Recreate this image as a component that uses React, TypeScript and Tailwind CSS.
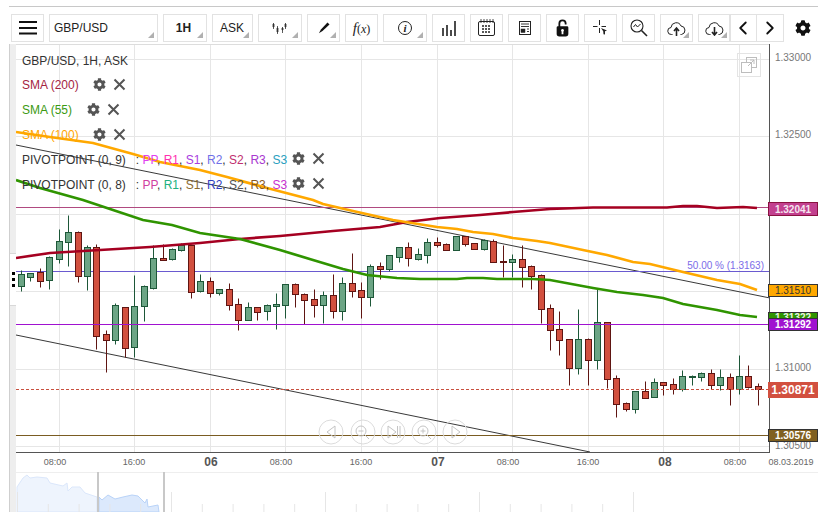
import React from 'react';
import { FaCog } from 'react-icons/fa';
import { ChevronLeft, ChevronRight } from 'lucide-react';

// candles: x, wick top, body top, body bottom, wick bottom, colour (1 = up)
type Candle = [number, number, number, number, number, number];

const groupA: Candle[] = [
  [64, 210, 223, 259, 272, 1], [91, 218, 220, 230, 242, 1], [121, 205, 217, 242, 260, 0], [148, 168, 172, 241, 266, 1],
  [178, 87, 124, 178, 188, 1], [205, 45, 97, 127, 197, 1], [235, 93, 97, 229, 245, 0], [262, 136, 142, 229, 269, 1],
  [289, 132, 142, 409, 446, 0], [319, 391, 403, 421, 515, 0], [346, 309, 316, 421, 431, 1], [376, 322, 322, 445, 471, 0],
  [403, 225, 319, 442, 471, 1], [433, 256, 259, 319, 362, 1], [460, 136, 175, 263, 266, 1], [490, 133, 175, 179, 181, 0],
  [517, 145, 148, 178, 181, 1], [544, 130, 136, 151, 152, 1], [574, 136, 136, 277, 293, 0], [601, 223, 244, 274, 277, 1],
  [631, 232, 244, 280, 292, 0], [658, 266, 268, 280, 284, 1], [688, 250, 268, 316, 329, 0], [715, 295, 313, 361, 389, 0],
  [745, 307, 322, 361, 361, 1], [772, 322, 322, 337, 359, 0], [802, 313, 316, 334, 359, 1], [829, 280, 313, 319, 386, 1],
];

const groupB: Candle[] = [
  [16, 253, 253, 316, 353, 1], [46, 250, 253, 283, 320, 0], [73, 280, 283, 301, 372, 0], [103, 268, 298, 316, 350, 0],
  [130, 274, 286, 316, 368, 1], [160, 223, 286, 334, 353, 0], [187, 232, 250, 334, 359, 1], [217, 160, 250, 274, 292, 0],
  [244, 247, 271, 292, 353, 0], [271, 193, 199, 292, 317, 1], [301, 187, 199, 208, 238, 0], [328, 166, 166, 208, 212, 1],
  [358, 142, 142, 172, 185, 1], [385, 127, 142, 175, 197, 0], [415, 145, 163, 178, 181, 1], [442, 115, 127, 166, 188, 1],
  [472, 112, 127, 136, 142, 0], [499, 130, 133, 151, 151, 0], [529, 109, 109, 151, 151, 1], [556, 109, 109, 133, 139, 0],
  [583, 130, 130, 148, 148, 0], [613, 118, 121, 148, 151, 1], [640, 118, 124, 187, 187, 0], [670, 136, 184, 187, 230, 0],
  [697, 163, 178, 187, 230, 1], [727, 136, 178, 202, 260, 0], [754, 196, 199, 229, 268, 0], [784, 223, 226, 328, 368, 0],
  [811, 313, 325, 391, 451, 0], [838, 334, 388, 421, 466, 0],
];

const groupC: Candle[] = [
  [58, 418, 418, 505, 556, 0], [85, 328, 418, 505, 523, 1], [115, 415, 418, 481, 556, 0], [142, 268, 367, 481, 508, 1],
  [172, 367, 367, 538, 563, 0], [199, 526, 535, 613, 650, 0], [229, 607, 610, 628, 634, 0], [256, 574, 574, 628, 640, 1],
  [286, 544, 574, 595, 595, 0], [313, 535, 547, 592, 592, 1], [340, 547, 547, 556, 586, 0], [370, 535, 553, 568, 583, 0],
  [397, 511, 529, 568, 574, 1], [427, 526, 529, 532, 556, 1], [454, 517, 520, 532, 544, 1], [484, 508, 520, 556, 568, 0],
  [511, 508, 532, 556, 571, 1], [541, 520, 532, 568, 616, 0], [568, 466, 529, 568, 583, 1], [595, 496, 529, 562, 565, 0],
  [625, 550, 559, 568, 616, 0],
];

const sma200 = "16,258 50,253 100,250 150,247 200,243 240,239 280,236 333,231 380,227 407,222 440,218 480,215 513,212 550,209 593,207.5 667,207.5 683,206 697,206 717,208 743,207 757,208";
const sma55 = "16,180 40,188 83,200 113,210 143,220 172,225 200,233 240,239 280,250 313,260 343,269 367,275 397,278 420,279 457,279 467,278 483,278 497,279 533,279 550,280 593,288 617,292 643,295 663,298 683,304 717,310 740,315 757,317";
const sma100 = "16,132 50,137 93,143 133,154 160,162 200,170 227,177 267,188 313,200 323,204 353,211 393,220 437,227 457,229 473,232 493,234 513,238 537,241 550,243 583,250 607,255 633,262 650,264 683,272 717,280 740,284 757,290";

const navLeft = "17,487 23,478 27,475 30,478 37,477 47,478 50,483 63,486 67,483 68,491 72,487 80,487 85,493 97,497";
const navMid = "99,497 102,500 108,495 115,499 123,497 132,495 138,496 145,503 147,499 148,507 158,505 159,512";

const vGrid = [59, 134, 210, 285, 361, 437, 512, 588, 663, 739];
const hGrid = [59, 136, 214, 291, 369, 446];
const timeLabels: [number, string][] = [[55, "08:00"], [134, "16:00"], [281, "08:00"], [361, "16:00"], [508, "08:00"], [588, "16:00"], [735, "08:00"]];
const dayLabels: [number, string][] = [[211, "06"], [438, "07"], [665, "08"]];
const axisLabels: [number, string][] = [[58, "1.33000"], [135, "1.32500"], [368, "1.31000"], [446, "1.30500"]];
const navTicks = Array.from({ length: 21 }, (_, i) => 17 + i * 30.8);

const CandleMark = ({ c, ox }: { c: Candle; ox: number }) => {
  const [zx, wt, bt, bb, wb, up] = c;
  const x = Math.floor(ox + zx / 3) + 0.5;
  const y = (v: number) => Math.round(200 + v / 3) + 0.5;
  const stroke = up ? '#1d5738' : '#5f1512';
  const fill = up ? '#6ca585' : '#d2503f';
  return (
    <g>
      <line x1={x} x2={x} y1={y(wt)} y2={y(wb)} stroke={stroke} />
      <rect x={x - 3} y={y(bt)} width={6} height={Math.max(y(bb) - y(bt), 1)} fill={fill} stroke={stroke} />
    </g>
  );
};

const Corner = () => (
  <span className="absolute right-[3px] bottom-[3px] w-0 h-0 border-l-[6px] border-b-[6px] border-l-transparent border-b-[#b0b0b0]" />
);

const ToolButton = ({ w, corner, children }: { w: string; corner?: boolean; children?: React.ReactNode }) => (
  <div className={`relative ${w} h-[28px] border border-[#e2e2e2] flex items-center justify-center text-[12px] text-[#222] shrink-0`}>
    {children}
    {corner && <Corner />}
  </div>
);

const IndicatorTools = () => (
  <span className="inline-flex items-center gap-[7px] text-[#555]">
    <FaCog size={13} />
    <svg width="13" height="13" viewBox="0 0 13 13"><path d="M1.500 1.500l10 10M11.500 1.500l-10 10" stroke="#555" strokeWidth="2" /></svg>
  </span>
);

const Pivot = ({ name, colors }: { name: string; colors: string[] }) => {
  const parts = ["PP", "R1", "S1", "R2", "S2", "R3", "S3"];
  return (
    <div className="flex items-center h-[25px]">
      <span className="text-[#333] whitespace-pre">{name}</span>
      <span className="text-[#333] ml-[10px] whitespace-pre">: </span>
      {parts.map((p, i) => (
        <span key={p} className="text-[#333] whitespace-pre">
          <span style={{ color: colors[i] }}>{p}</span>
          {i < 6 ? ", " : ""}
        </span>
      ))}
      <span className="ml-[5px]"><IndicatorTools /></span>
    </div>
  );
};

const CloudIcon = ({ down }: { down?: boolean }) => (
  <svg width="19" height="15" viewBox="0 0 19 15" fill="none" stroke="#222">
    <path d="M5.500 13.500H4.500a3.500 3.500 0 0 1-.5-7 5.200 5.200 0 0 1 10-1.500 4.300 4.300 0 0 1 .5 8.500h-1" strokeWidth="1" />
    <path d={down ? "M9.500 6v7.500M7 11l2.500 3 2.500-3" : "M9.500 15V7.500M7 10l2.500-3 2.500 3"} strokeWidth="1.600" />
  </svg>
);

const Toolbar = () => (
  <div className="flex items-start pl-[2px] pt-[7px] gap-[5px] h-[37px]">
    <ToolButton w="w-[33px]">
      <svg width="18" height="14" viewBox="0 0 18 14"><path d="M0 1h18M0 7h18M0 12.500h18" stroke="#111" strokeWidth="1.800" /></svg>
    </ToolButton>
    <ToolButton w="w-[109px]" corner><span className="w-full pl-[4px]">GBP/USD</span></ToolButton>
    <ToolButton w="w-[44px]" corner><span className="font-bold pr-[3px]">1H</span></ToolButton>
    <ToolButton w="w-[41px]" corner><span className="pr-[1px]">ASK</span></ToolButton>
    <ToolButton w="w-[44px]" corner>
      <svg className="mr-[1px]" width="15" height="11" viewBox="0 0 15 11" stroke="#333" fill="#333">
        <path d="M1.500 0v6M5.500 3v8M10.500 4v6M13.500 0v6" strokeWidth=".8" />
        <path d="M1 1h1v3H1zM5 5h1v4H5zM10 5h1v2h-1zM13 1h1v3h-1z" strokeWidth=".8" />
      </svg>
    </ToolButton>
    <ToolButton w="w-[33px]" corner>
      <svg className="mb-[1px]" width="12" height="12" viewBox="0 0 12 12"><path d="M9.500.5l2 2-7 6.500-3.600 2.200 2-3.600z" fill="#111" /></svg>
    </ToolButton>
    <ToolButton w="w-[33px]">
      <span className="[font-family:'Liberation_Serif',serif] italic text-[15px] leading-none">f<span className="text-[12px] not-italic">(<span className="italic">x</span>)</span></span>
    </ToolButton>
    <ToolButton w="w-[44px]" corner>
      <span className="w-[14px] h-[14px] rounded-full border border-[#222] flex items-center justify-center [font-family:'Liberation_Serif',serif] italic font-bold text-[11px]">i</span>
    </ToolButton>
    <ToolButton w="w-[33px]">
      <svg width="16" height="16" viewBox="0 0 16 16"><path d="M2 16V8M6 16V5M10 16V10M14 16V1" stroke="#111" strokeWidth="1.500" /></svg>
    </ToolButton>
    <ToolButton w="w-[33px]">
      <svg width="18" height="18" viewBox="0 0 18 18" fill="none" stroke="#222">
        <rect x=".5" y="2.500" width="16" height="14" rx="1.500" />
        <path d="M3 0v4M6 0v4M9 0v4M12 0v4M15 0v4" strokeWidth=".8" />
        <path d="M4 7h9M4 10h9M4 13h9" strokeWidth="1.500" strokeDasharray="2 1" />
      </svg>
    </ToolButton>
    <ToolButton w="w-[33px]">
      <svg width="12" height="14" viewBox="0 0 12 14" fill="none" stroke="#222">
        <rect x=".5" y=".5" width="11" height="13" />
        <path d="M2 3h8M2 5.500h8M8 8h2M8 10.500h2" strokeWidth=".9" />
        <rect x="2" y="8" width="4" height="3.500" fill="#222" strokeWidth=".5" />
      </svg>
    </ToolButton>
    <ToolButton w="w-[33px]">
      <svg width="13" height="18" viewBox="0 0 14 20">
        <path d="M3.500 9V5a3.500 3.500 0 0 1 7 0v1" fill="none" stroke="#111" strokeWidth="2" />
        <path fillRule="evenodd" d="M2 8h10a1.500 1.500 0 0 1 1.500 1.500v7A3 3 0 0 1 10.500 19.500h-7A3 3 0 0 1 .5 16.500v-7A1.500 1.500 0 0 1 2 8zM7 11a1.700 1.700 0 0 0-1 3v3h2v-3a1.700 1.700 0 0 0-1-3z" fill="#111" />
      </svg>
    </ToolButton>
    <ToolButton w="w-[33px]">
      <svg width="16" height="16" viewBox="0 0 16 16">
        <path d="M6.500 0v5M6.500 8v5M0 6.500h4.500M8.500 6.500h4.500" stroke="#222" />
        <path d="M8 8l6 2.500-2 .8 0 3.200-1.500-.2-.3-3z" fill="#222" />
      </svg>
    </ToolButton>
    <ToolButton w="w-[33px]">
      <svg width="18" height="18" viewBox="0 0 18 18" fill="none" stroke="#222">
        <circle cx="7" cy="7" r="6" strokeWidth="1.100" />
        <path d="M11.500 11.500L17 17" strokeWidth="1.600" />
        <path d="M3.500 8l2-2.500 2 2.500 3-3" strokeWidth="1" />
      </svg>
    </ToolButton>
    <ToolButton w="w-[33px]" corner><CloudIcon /></ToolButton>
    <ToolButton w="w-[33px]" corner><CloudIcon down /></ToolButton>
    <div className="flex h-[28px] -ml-[7px] bg-white shrink-0">
      <div className="w-[28px] border border-[#e2e2e2] flex items-center justify-center"><ChevronLeft size={22} strokeWidth={2} color="#111" /></div>
      <div className="w-[27px] border border-l-0 border-[#e2e2e2] flex items-center justify-center"><ChevronRight size={22} strokeWidth={2} color="#111" /></div>
    </div>
    <div className="w-[16px] ml-[6px] h-[28px] flex items-center justify-center text-[#111] shrink-0"><FaCog size={16} /></div>
  </div>
);

const Legend = () => (
  <div className="absolute left-[6px] top-[3px] text-[12px] leading-none">
    <div className="flex items-center h-[25px] pt-[2px] text-[#333]">GBP/USD, 1H, ASK</div>
    <div className="flex items-center h-[25px] text-[#a5243f]"><span className="w-[71px]">SMA (200)</span><IndicatorTools /></div>
    <div className="flex items-center h-[25px] text-[#3b9a12]"><span className="w-[65px]">SMA (55)</span><IndicatorTools /></div>
    <div className="flex items-center h-[25px] text-[#ffa500]"><span className="w-[71px]">SMA (100)</span><IndicatorTools /></div>
    <Pivot name="PIVOTPOINT (0, 9)" colors={["#e040f0", "#ff30b0", "#a83ce0", "#7070e8", "#c03070", "#a838d0", "#2a9fc0"]} />
    <Pivot name="PIVOTPOINT (0, 8)" colors={["#d0409f", "#20b080", "#8a6a30", "#3040c0", "#555555", "#8a5a20", "#c830d0"]} />
  </div>
);

const NavButton = ({ cx, children }: { cx: number; children: React.ReactNode }) => (
  <g fill="none" stroke="#c4c4c4">
    <circle cx={cx} cy={432} r={12} stroke="#dcdcdc" />
    {children}
  </g>
);

const PriceTag = ({ y, h, bg, border, color, size, label, bold }: { y: number; h: number; bg: string; border: string; color: string; size: number; label: string; bold?: boolean }) => (
  <g>
    <rect x={768.5} y={y + 0.5} width={49} height={h} fill={bg} stroke={border} />
    <text x={793} y={y + h / 2 + size * 0.36 + 0.5} textAnchor="middle" fontSize={size} fill={color} fontWeight={bold ? 'bold' : 'normal'}>{label}</text>
  </g>
);

const Chart = () => (
  <svg className="block" width="802" height="468" viewBox="16 44 802 468">
    {vGrid.map((x) => <line key={x} x1={x + 0.5} x2={x + 0.5} y1={44} y2={452} stroke="#e6e6e6" />)}
    {hGrid.map((y) => <line key={y} x1={16} x2={769} y1={y + 0.5} y2={y + 0.5} stroke="#e6e6e6" />)}
    <line x1={16} x2={770} y1={44.500} y2={44.500} stroke="#dddddd" />

    <line x1={16} x2={770} y1={145} y2={298} stroke="#222" strokeWidth={0.9} />
    <line x1={16} x2={590} y1={335} y2={452} stroke="#222" strokeWidth={0.9} />

    <line x1={16} x2={770} y1={207.500} y2={207.500} stroke="#b04a80" />
    <line x1={16} x2={770} y1={271.500} y2={271.500} stroke="#6a5ad0" />
    <line x1={16} x2={770} y1={435.500} y2={435.500} stroke="#7a5c22" />

    {groupA.map((c) => <CandleMark key={c[0]} c={c} ox={0} />)}
    {groupB.map((c) => <CandleMark key={c[0]} c={c} ox={280} />)}
    {groupC.map((c) => <CandleMark key={c[0]} c={c} ox={550} />)}

    <line x1={16} x2={770} y1={324.500} y2={324.500} stroke="#a012d0" />
    <line x1={16} x2={770} y1={389.500} y2={389.500} stroke="#c9503f" strokeDasharray="3 2" />

    <polyline points={sma200} fill="none" stroke="#a50021" strokeWidth={2.7} />
    <polyline points={sma55} fill="none" stroke="#2f9400" strokeWidth={2.7} />
    <polyline points={sma100} fill="none" stroke="#ffa800" strokeWidth={2.7} />

    <text x={764} y={269} textAnchor="end" fontSize={10} fill="#7b6be8">50.00 % (1.3163)</text>

    {/* axes */}
    <line x1={769.500} x2={769.500} y1={44} y2={452} stroke="#555" />
    <line x1={16} x2={770} y1={452.500} y2={452.500} stroke="#555" />
    {axisLabels.map(([y, t]) => <text key={t} x={793} y={y + 3} textAnchor="middle" fontSize={10} fill="#777">{t}</text>)}

    <PriceTag y={202} h={13} bg="#c2408f" border="#8a1240" color="#f5e6ef" size={10} label="1.32041" bold />
    <PriceTag y={284} h={12} bg="#ffa800" border="#333" color="#333" size={10} label="1.31510" />
    <PriceTag y={312} h={8} bg="#2f9400" border="#333" color="#e8f5e0" size={10} label="" />
    <text x={793} y={321} textAnchor="middle" fontSize={10} fontWeight="bold" fill="#e8f5e0">1.31322</text>
    <PriceTag y={318} h={12} bg="#a012d0" border="#333" color="#fff" size={10} label="1.31292" bold />
    <PriceTag y={382} h={15} bg="#d2503f" border="#d2503f" color="#fff" size={12} label="1.30871" bold />
    <PriceTag y={429} h={12} bg="#806020" border="#333" color="#fff" size={10} label="1.30576" bold />

    {/* zoom and scroll buttons */}
    <NavButton cx={331}><path d="M335 426v12l-8-6z" /></NavButton>
    <NavButton cx={363}><circle cx={361} cy={431} r={5} /><path d="M358.500 431h5M365 435l4 4" /></NavButton>
    <NavButton cx={393}><path d="M388 426v12l8-6zM397.500 426v12M400 426v12" /></NavButton>
    <NavButton cx={424}><circle cx={423} cy={431} r={5} /><path d="M420.500 431h5M423 428.500v5M427 435l4 4" /></NavButton>
    <NavButton cx={455}><path d="M452 426v12l8-6z" /></NavButton>

    {/* time axis */}
    {timeLabels.map(([x, t]) => <text key={x} x={x} y={465} textAnchor="middle" fontSize={9} fill="#666">{t}</text>)}
    {dayLabels.map(([x, t]) => <text key={x} x={x} y={466} textAnchor="middle" fontSize={12} fontWeight="bold" fill="#555">{t}</text>)}
    <text x={791} y={465} textAnchor="middle" fontSize={9} fill="#666">08.03.2019</text>

    {/* navigator */}
    <line x1={16} x2={818} y1={472.500} y2={472.500} stroke="#eeeeee" />
    <polygon points={`${navLeft} 97,512 17,512`} fill="#eef4fd" stroke="#dbe7fb" />
    <polygon points={`${navMid} 99,512`} fill="#dce9fc" stroke="#b9d3f8" />
    {navTicks.map((x, i) => (
      <line key={x} x1={x + 0.5} x2={x + 0.5} y1={i % 5 === 0 ? 492 : 504} y2={512} stroke="#e6e6e6" />
    ))}
    <rect x={97} y={472} width={2} height={40} fill="#c8c8c8" />
    <rect x={163} y={472} width={2} height={40} fill="#c8c8c8" />
  </svg>
);

export default function App() {
  return (
    <div className="relative w-[827px] h-[523px] bg-white overflow-hidden [font-family:'Liberation_Sans',Arial,sans-serif]">
      <div className="ml-[9px] w-[809px] mt-[6px] border-t border-[#c8c8c8]">
        <Toolbar />
        <div className="flex h-[468px]">
          <div className="w-[7px] h-[468px] border-l border-[#cfcfcf] bg-[#eeeeee] flex flex-col shrink-0">
            <div className="h-[210px] border-b border-[#d8d8d8]" />
            <div className="h-[51px] bg-white flex flex-col items-center justify-center gap-[3px]">
              <span className="w-[3px] h-[3px] bg-black" />
              <span className="w-[3px] h-[3px] bg-black" />
              <span className="w-[3px] h-[3px] bg-black" />
            </div>
            <div className="flex-1 border-t border-[#d8d8d8]" />
          </div>
          <div className="relative">
            <Chart />
            <Legend />
            <div className="absolute left-[721px] top-[9px] w-[24px] h-[24px] border border-[#e4e4e4] flex items-center justify-center">
              <svg width="16" height="16" viewBox="0 0 16 16" fill="none" stroke="#bdbdbd">
                <rect x="5.500" y=".5" width="10" height="10" />
                <rect x=".5" y="5.500" width="10" height="10" fill="#ffffff" />
                <path d="M7 9l6-6M9 3h4v4" />
              </svg>
            </div>
          </div>
        </div>
      </div>
    </div>
  );
}
